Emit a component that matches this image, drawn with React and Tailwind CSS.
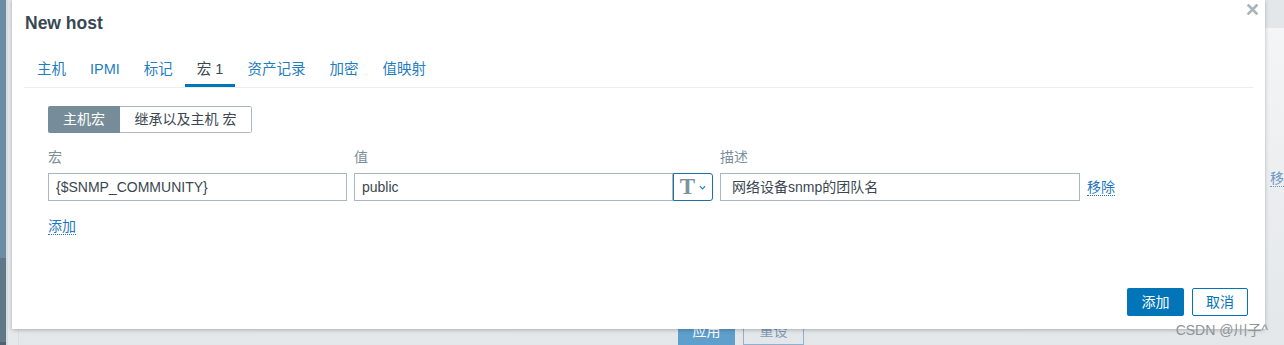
import { useState } from 'react'

const tabs = ['主机', 'IPMI', '标记', '宏 1', '资产记录', '加密', '值映射']

function DottedLink({ children, className = '' }) {
  return (
    <a className={`text-[14px] leading-[16px] text-[#1f78bd] border-b border-dotted border-[#1f78bd] cursor-pointer ${className}`}>
      {children}
    </a>
  )
}

export default function App() {
  const [tab, setTab] = useState('宏 1')
  const [modo, setModo] = useState('host')

  return (
    <div className="relative w-[1284px] h-[345px] overflow-hidden flex font-['Liberation_Sans','Noto_Sans_CJK_SC',sans-serif]">
      {/* Menú lateral */}
      <div className="w-[9px] flex flex-col">
        <div className="h-[258px] bg-[#6b8ca3]" />
        <div className="flex-1 bg-[#607785] border-b-[3px] border-[#4f626e]" />
      </div>
      <div className="w-[3px] bg-[#d6dde2]" />

      {/* Página de fondo */}
      <div className="flex-1 flex flex-col bg-[#e5e9ec] pl-[10px]">
        <div className="h-[40px] bg-[#e3e7ea] -ml-[10px]" />
        <div className="flex-1 flex flex-col border-l border-[#d9dee2] bg-gradient-to-b from-[#f4f5f6] to-[#e3e7ea]">
          <div className="flex items-center mt-[137px]">
            <div className="w-[1246px] h-[26px] border border-[#b9c5cd] bg-white shrink-0" />
            <DottedLink className="ml-[5px] shrink-0 text-[#6f98c4] border-[#6f98c4]">移除</DottedLink>
          </div>
          <div className="flex gap-[8px] ml-[659px] mt-[126px]">
            <button className="w-[57px] h-[28px] bg-[#5e9fcb] text-white text-[14px]">应用</button>
            <button className="w-[61px] h-[28px] border border-[#8db1cf] text-[#7d9cb6] text-[14px]">重设</button>
          </div>
        </div>
      </div>

      {/* Diálogo */}
      <div className="absolute left-[12px] top-0 w-[1253px] h-[329px] bg-white shadow-[0_1px_4px_rgba(0,0,0,0.25)] flex flex-col">
        <button className="absolute right-[7px] top-[4px] w-[11px] h-[11px]">
          <svg viewBox="0 0 11 11" className="w-[11px] h-[11px]">
            <path d="M1.5 1.5 L9.5 9.5 M9.5 1.5 L1.5 9.5" stroke="#a9b4bb" strokeWidth="2.6" strokeLinecap="square" />
          </svg>
        </button>

        <div className="h-[52px] pl-[13px] pt-[13px]">
          <h1 className="text-[17.5px] leading-[20px] font-bold text-[#384853]">New host</h1>
        </div>

        {/* Pestañas */}
        <div className="flex mx-[12px] pl-[1px] border-b border-[#ebeef0]">
          {tabs.map(t => (
            <div
              key={t}
              onClick={() => setTab(t)}
              className={`px-[12px] pt-[8px] pb-[6px] text-[14.5px] leading-[18px] border-b-[3px] cursor-pointer ${
                tab === t ? 'border-[#0275b8] text-[#3a4750]' : 'border-transparent text-[#1f7dc0]'
              }`}
            >
              {t}
            </div>
          ))}
        </div>

        <div className="px-[36px] pt-[18px] flex flex-col items-start">
          {/* Selector de macros */}
          <div className="flex h-[27px] text-[14px] rounded-[2px] overflow-hidden">
            <button
              onClick={() => setModo('host')}
              className={`w-[72px] ${modo === 'host' ? 'bg-[#768c98] text-white' : 'border border-[#a9b8c2] text-[#3a4750]'}`}
            >
              主机宏
            </button>
            <button
              onClick={() => setModo('inherited')}
              className={`w-[132px] ${modo === 'inherited' ? 'bg-[#768c98] text-white' : 'border border-l-0 border-[#a9b8c2] text-[#3a4750]'} rounded-r-[2px]`}
            >
              继承以及主机 宏
            </button>
          </div>

          {/* Encabezados */}
          <div className="flex gap-[7px] mt-[15px] text-[14px] leading-[18px] text-[#7a8f9b]">
            <div className="w-[299px]">宏</div>
            <div className="w-[359px]">值</div>
            <div className="w-[360px]">描述</div>
          </div>

          {/* Fila de macro */}
          <div className="flex items-center gap-[7px] mt-[7px] text-[14px] text-[#3a4750]">
            <div className="w-[299px] h-[28px] border border-[#a9b7c2] px-[7px] flex items-center">{'{$SNMP_COMMUNITY}'}</div>
            <div className="flex">
              <div className="w-[319px] h-[28px] border border-[#a9b7c2] px-[7px] flex items-center">public</div>
              <div className="w-[40px] h-[28px] border border-[#1f6ea6] rounded-r-[3px] flex items-center justify-center gap-[4px]">
                <span className="font-['Liberation_Serif',serif] font-bold text-[23px] leading-[22px] text-[#7b929f]">T</span>
                <svg viewBox="0 0 8 5" className="w-[7px] h-[5px]">
                  <path d="M1 1 L4 4 L7 1" fill="none" stroke="#1f7dc0" strokeWidth="1.4" />
                </svg>
              </div>
            </div>
            <div className="w-[360px] h-[28px] border border-[#a9b7c2] pl-[11px] flex items-center">网络设备snmp的团队名</div>
            <DottedLink>移除</DottedLink>
          </div>

          <DottedLink className="mt-[17px]">添加</DottedLink>
        </div>

        {/* Pie */}
        <div className="mt-auto flex justify-end gap-[8px] pr-[17px] pb-[13px]">
          <button className="w-[57px] h-[28px] bg-[#0275b8] text-white text-[14px] rounded-[2px]">添加</button>
          <button className="w-[56px] h-[28px] border border-[#0275b8] text-[#0275b8] text-[14px] rounded-[2px]">取消</button>
        </div>
      </div>

      {/* Marca de agua */}
      <div className="absolute right-[16px] top-[322px] text-[14px] leading-[16px] text-[#8f9497]">CSDN @川子^</div>
    </div>
  )
}
